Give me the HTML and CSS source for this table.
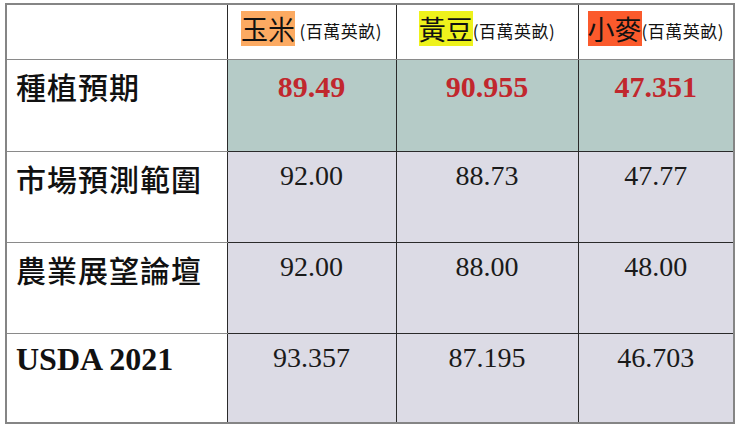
FILE: index.html
```html
<!DOCTYPE html>
<html lang="zh-Hant">
<head>
<meta charset="utf-8">
<title>Acreage</title>
<link rel="stylesheet" href="styles.css">
</head>
<body>
<table class="grid">
  <colgroup>
    <col class="c0"><col class="c1"><col class="c2"><col class="c3">
  </colgroup>
  <tr class="head">
    <th class="label"></th>
    <th><span class="crop corn">玉米</span><span class="unit"> (百萬英畝)</span></th>
    <th><span class="crop soy">黃豆</span><span class="unit">(百萬英畝)</span></th>
    <th><span class="crop wheat">小麥</span><span class="unit">(百萬英畝)</span></th>
  </tr>
  <tr class="r1">
    <td class="label">種植預期</td>
    <td class="val hot">89.49</td>
    <td class="val hot">90.955</td>
    <td class="val hot">47.351</td>
  </tr>
  <tr class="r2">
    <td class="label">市場預測範圍</td>
    <td class="val">92.00</td>
    <td class="val">88.73</td>
    <td class="val">47.77</td>
  </tr>
  <tr class="r3">
    <td class="label">農業展望論壇</td>
    <td class="val">92.00</td>
    <td class="val">88.00</td>
    <td class="val">48.00</td>
  </tr>
  <tr class="r4">
    <td class="label usda">USDA 2021</td>
    <td class="val">93.357</td>
    <td class="val">87.195</td>
    <td class="val">46.703</td>
  </tr>
</table>
</body>
</html>
```

FILE: styles.css
```css
html, body {
  margin: 0;
  padding: 0;
  background: #ffffff;
}

body {
  padding: 3px 0 0 5px;
}

.grid {
  border-collapse: collapse;
  table-layout: fixed;
  width: 730px;
  border: 2px solid #858585;
}

.c0 { width: 221px; }
.c1 { width: 169px; }
.c2 { width: 182px; }
.c3 { width: 156px; }

.grid th,
.grid td {
  box-sizing: border-box;
  padding: 0;
  vertical-align: top;
  border: 1px solid #2a2a2a;
  overflow: hidden;
}

.grid .label {
  border-top-color: #8a8a8a;
  border-bottom-color: #8a8a8a;
  background: #ffffff;
  text-align: left;
  padding: 9px 0 0 9px;
  font-family: "Noto Sans CJK TC", "Noto Sans", sans-serif;
  font-weight: 500;
  font-size: 30px;
  line-height: 34px;
  color: #111111;
  letter-spacing: 1px;
}

.head { height: 55px; }
.head th {
  height: 55px;
  background: #ffffff;
  text-align: center;
  vertical-align: middle;
  padding: 0 0 6px 0;
  white-space: nowrap;
  font-weight: 400;
  border-bottom-color: #8a8a8a;
}

.crop {
  display: inline-block;
  font-family: "Noto Sans CJK TC", sans-serif;
  font-size: 27px;
  line-height: 35px;
  color: #111111;
  vertical-align: middle;
}

.corn { background: #fcaa62; }
.soy { background: #eef21c; }
.wheat { background: #fb5a2c; }

.unit {
  font-family: "Noto Sans CJK TC", sans-serif;
  font-size: 17px;
  color: #111111;
  vertical-align: middle;
  letter-spacing: 0.5px;
  position: relative;
  top: 2px;
}

.r1, .r1 td { height: 92px; }
.r2, .r2 td { height: 91px; }
.r3, .r3 td { height: 91px; }
.r4, .r4 td { height: 90px; }

.val {
  background: #dcdbe5;
  text-align: center;
  font-family: "Liberation Serif", serif;
  font-size: 28px;
  line-height: 34px;
  color: #1a1a1a;
}

.grid .val {
  padding-top: 7px;
}

.grid .val.hot {
  background: #b5cbc7;
  font-weight: 700;
  font-size: 30px;
  color: #c1272d;
  padding-top: 10px;
}

.grid .usda {
  font-family: "Liberation Serif", serif;
  font-weight: 700;
  font-size: 32px;
  letter-spacing: 0;
  padding-top: 8px;
}
```
